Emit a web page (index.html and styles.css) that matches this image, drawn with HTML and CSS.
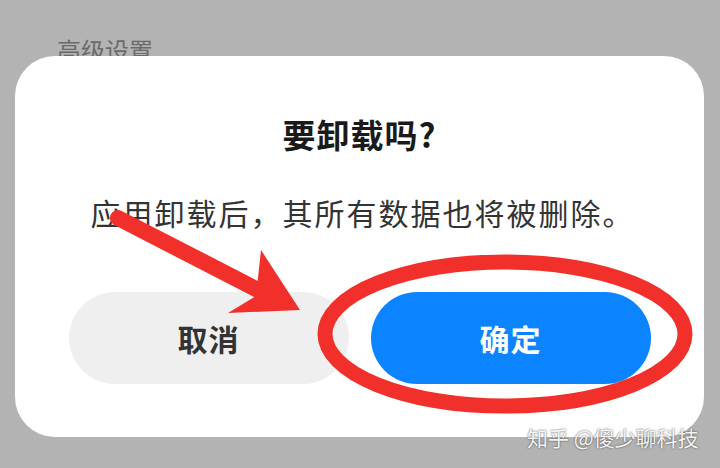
FILE: index.html
```html
<!DOCTYPE html>
<html lang="zh-cn">
<head>
    <meta charset="UTF-8">
    <title>要卸载吗?</title>
    <link rel="stylesheet" href="styles.css">
</head>
<body>
    <div class="page">
        <div class="behind">高级设置</div>

        <div class="dialog">
            <div class="dialog-title">要卸载吗?</div>
            <div class="dialog-msg">应用卸载后，其所有数据也将被删除。</div>
            <div class="dialog-btns">
                <button class="btn btn-cancel">取消</button>
                <button class="btn btn-ok">确定</button>
            </div>
        </div>

        <svg class="marks" width="720" height="468" viewBox="0 0 720 468">
            <line x1="118" y1="218" x2="262" y2="292" stroke="#f2302b" stroke-width="16" stroke-linecap="round"/>
            <polygon points="261,250 300,310 228,313 256,296" fill="#f2302b"/>
            <ellipse cx="505" cy="334" rx="180" ry="72" fill="none" stroke="#f2302b" stroke-width="15"/>
        </svg>

        <div class="watermark">知乎 @傻少聊科技</div>
    </div>
</body>
</html>
```

FILE: styles.css
```css
html, body {
    margin: 0;
    padding: 0;
}
body {
    background: #b3b3b3;
    font-family: "Noto Sans CJK SC", "Noto Sans", sans-serif;
}
.page {
    position: relative;
    width: 720px;
    height: 468px;
    overflow: hidden;
}
.behind {
    height: 56px;
    box-sizing: border-box;
    padding: 36px 0 0 57px;
    font-size: 24px;
    line-height: 28px;
    color: #6a6a6a;
}
.dialog {
    position: relative;
    margin-left: 15px;
    width: 689px;
    height: 381px;
    box-sizing: border-box;
    padding-top: 58px;
    background: #fff;
    border-radius: 40px;
    display: flex;
    flex-direction: column;
    align-items: center;
}
.dialog-title {
    font-size: 33px;
    line-height: 40px;
    font-weight: bold;
    color: #1a1a1a;
    letter-spacing: 1px;
}
.dialog-msg {
    margin-top: 38px;
    padding-left: 6px;
    font-size: 30px;
    line-height: 40px;
    color: #333;
    letter-spacing: 2px;
}
.dialog-btns {
    margin-top: 60px;
    display: flex;
    gap: 22px;
}
.btn {
    width: 280px;
    height: 92px;
    border: none;
    border-radius: 46px;
    font-family: inherit;
    font-size: 30px;
    font-weight: bold;
    letter-spacing: 1px;
}
.btn-cancel {
    background: #efefef;
    color: #333;
}
.btn-ok {
    background: #0d84ff;
    color: #fff;
}
.marks {
    position: absolute;
    left: 0;
    top: 0;
}
.watermark {
    position: absolute;
    left: 527px;
    top: 423px;
    font-size: 21px;
    line-height: 28px;
    color: #f4f4f4;
    text-shadow: 0 0 2px rgba(0, 0, 0, 0.7);
}
```
